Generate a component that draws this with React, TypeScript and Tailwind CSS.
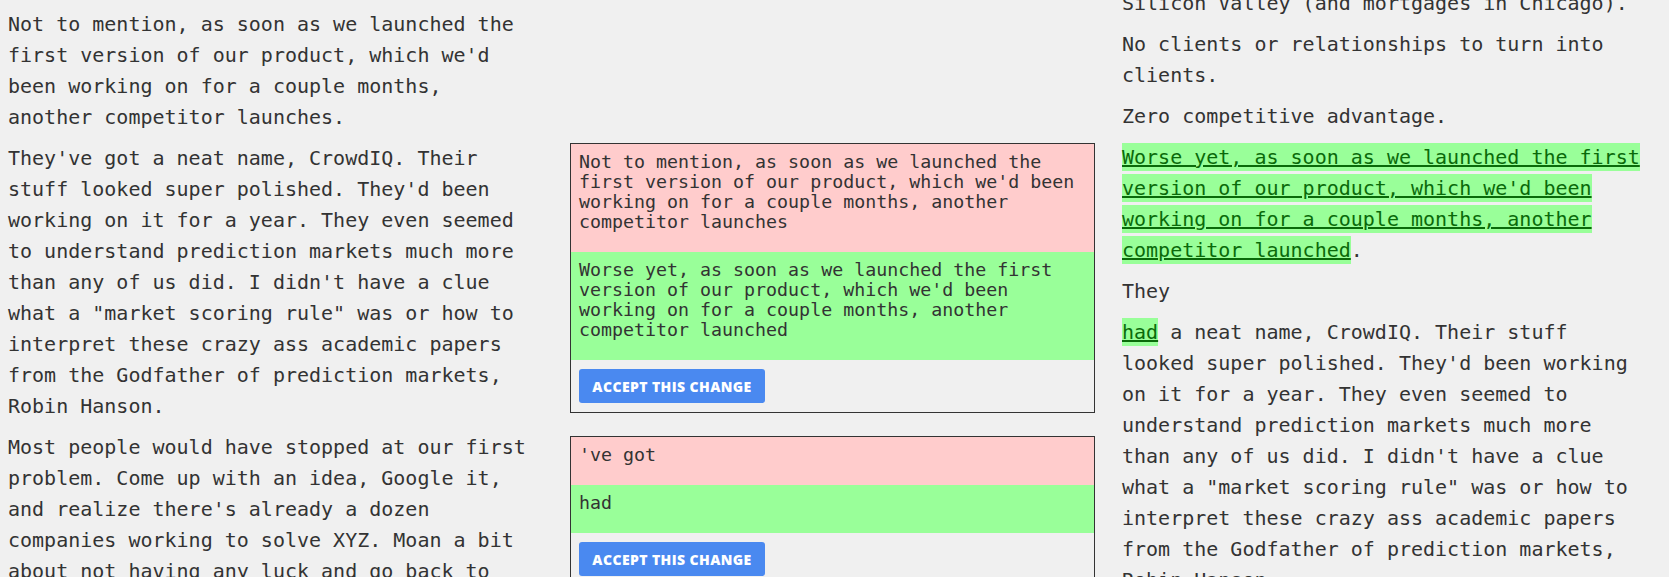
import React from "react";

const Hl = ({ children }: { children: React.ReactNode }) => (
  <span className="bg-[#99ff99] py-[2px] text-[#0a6a0a] underline decoration-[#0a6a0a]">{children}</span>
);

function ChangeCard({ removed, added }: { removed: string; added: string }) {
  return (
    <div className="border border-[#333]">
      <div className="bg-[#ffcccc] px-2 pt-2 pb-5 text-[18.3px] leading-[20px]">{removed}</div>
      <div className="bg-[#99ff99] px-2 pt-2 pb-5 text-[18.3px] leading-[20px]">{added}</div>
      <div className="px-[8px] py-[9px]">
        <button className="flex h-[34px] w-[186px] items-center justify-center rounded-[3px] bg-[#4a89f0] font-['Open_Sans',sans-serif] text-[14px] font-extrabold tracking-[0.4px] text-white">
          ACCEPT THIS CHANGE
        </button>
      </div>
    </div>
  );
}

export default function App() {
  return (
    <div className="h-[577px] w-[1669px] overflow-hidden bg-[#f0f0f0] font-['DejaVu_Sans_Mono',monospace] text-[#333]">
      <div className="flex items-start">
        <div className="ml-[8px] w-[520px] pt-[9px] text-[20px] leading-[31px] flex flex-col gap-[10px]">
          <p>
            Not to mention, as soon as we launched the first version of our product, which we'd been working on for a
            couple months, another competitor launches.
          </p>
          <p>
            They've got a neat name, CrowdIQ. Their stuff looked super polished. They'd been working on it for a year.
            They even seemed to understand prediction markets much more than any of us did. I didn't have a clue what a
            "market scoring rule" was or how to interpret these crazy ass academic papers from the Godfather of
            prediction markets, Robin Hanson.
          </p>
          <p>
            Most people would have stopped at our first problem. Come up with an idea, Google it, and realize there's
            already a dozen companies working to solve XYZ. Moan a bit about not having any luck and go back to their
            day jobs.
          </p>
        </div>

        <div className="ml-[42px] w-[525px] pt-[143px] flex flex-col gap-[23px]">
          <ChangeCard
            removed="Not to mention, as soon as we launched the first version of our product, which we'd been working on for a couple months, another competitor launches"
            added="Worse yet, as soon as we launched the first version of our product, which we'd been working on for a couple months, another competitor launched"
          />
          <ChangeCard removed="'ve got" added="had" />
        </div>

        <div className="ml-[27px] w-[520px] -mt-[12px] text-[20px] leading-[31px] flex flex-col gap-[10px]">
          <p>Silicon Valley (and mortgages in Chicago).</p>
          <p>No clients or relationships to turn into clients.</p>
          <p>Zero competitive advantage.</p>
          <p>
            <Hl>
              Worse yet, as soon as we launched the first version of our product, which we'd been working on for a
              couple months, another competitor launched
            </Hl>
            .
          </p>
          <p>They</p>
          <p>
            <Hl>had</Hl> a neat name, CrowdIQ. Their stuff looked super polished. They'd been working on it for a year.
            They even seemed to understand prediction markets much more than any of us did. I didn't have a clue what a
            "market scoring rule" was or how to interpret these crazy ass academic papers from the Godfather of
            prediction markets, Robin Hanson.
          </p>
        </div>
      </div>
    </div>
  );
}
